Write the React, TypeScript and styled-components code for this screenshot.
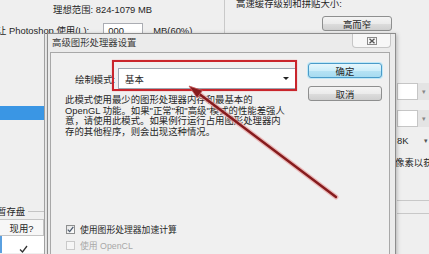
import styled, { createGlobalStyle } from 'styled-components';

const GlobalStyle = createGlobalStyle`
	html, body {
		margin: 0;
		padding: 0;
		background: #efefef;
	}

	body {
		font-family: 'Liberation Sans', 'Noto Sans CJK SC', sans-serif;
		color: #262626;
	}
`;

const App = () => {
	return (
		<Screen>
			<GlobalStyle />

			<TopBand>
				<TopLeft>
					<RangeLine>理想范围: 824-1079 MB</RangeLine>
					<UsageLine>
						让 Photoshop 使用(L):
						<UsageInput>000</UsageInput>
						<UsageUnit>MB(60%)</UsageUnit>
					</UsageLine>
				</TopLeft>
				<CacheGroup>
					<CacheTitle>高速缓存级别和拼贴大小:</CacheTitle>
					<PlainButton>高而窄</PlainButton>
				</CacheGroup>
			</TopBand>

			<Body>
				<Sidebar>
					<SideItem />
					<ScratchLegend>
						暂存盘
						<LegendRule />
					</ScratchLegend>
					<ScratchTable>
						<HeaderCell>现用?</HeaderCell>
						<TableRow>
							<svg width='9' height='8' viewBox='0 0 9 8'>
								<path d='M1 4.5 L3.5 7 L8 1' fill='none' stroke='#333' strokeWidth='1.3' />
							</svg>
						</TableRow>
					</ScratchTable>
				</Sidebar>

				<Middle />

				<RightStrip>
					<Combo $top={50}>
						<ComboField />
						<ComboArrow>▾</ComboArrow>
					</Combo>
					<Combo $top={10}>
						<ComboField />
						<ComboArrow>▾</ComboArrow>
					</Combo>
					<TileRow>
						8K
						<span>▾</span>
					</TileRow>
					<HintRow>像素以获</HintRow>
					<StripRule $top={30} />
					<StripRule $top={12} />
				</RightStrip>
			</Body>

			<Dialog>
				<TitleBar>
					<Title>高级图形处理器设置</Title>
					<CloseButton>
						<svg width='10' height='8' viewBox='0 0 10 8'>
							<rect x='0.5' y='0.5' width='9' height='7' fill='none' stroke='#8a8a8a' />
							<path d='M2.5 1.8 L7.5 6.2 M7.5 1.8 L2.5 6.2' stroke='#555' strokeWidth='1.4' />
						</svg>
					</CloseButton>
				</TitleBar>

				<Client>
					<MainColumn>
						<FormRow>
							<FieldLabel>绘制模式:</FieldLabel>
							<Select>
								基本
								<Caret />
							</Select>
						</FormRow>

						<Description>
							此模式使用最少的图形处理器内存和最基本的
							<br />
							OpenGL 功能。如果"正常"和"高级"模式的性能差强人
							<br />
							意，请使用此模式。如果例行运行占用图形处理器内
							<br />
							存的其他程序，则会出现这种情况。
						</Description>

						<OptionList>
							<OptionRow>
								<CheckBox>
									<svg width='7' height='7' viewBox='0 0 7 7'>
										<path d='M0.8 3.6 L2.7 5.6 L6.3 0.8' fill='none' stroke='#4b5a6e' strokeWidth='1.3' />
									</svg>
								</CheckBox>
								使用图形处理器加速计算
							</OptionRow>
							<OptionRow $disabled>
								<CheckBox $disabled />
								使用 OpenCL
							</OptionRow>
						</OptionList>
					</MainColumn>

					<ButtonColumn>
						<DialogButton $primary>确定</DialogButton>
						<DialogButton>取消</DialogButton>
					</ButtonColumn>
				</Client>
			</Dialog>

			<RedBox />

			<Arrow width='429' height='254' viewBox='0 0 429 254'>
				<line x1='336' y1='197' x2='198' y2='93' stroke='#e9a3a3' strokeWidth='5' strokeLinecap='round' opacity='0.7' />
				<line x1='336' y1='197' x2='198' y2='93' stroke='#861b1d' strokeWidth='2.4' strokeLinecap='round' />
				<polygon points='189,86 202.5,90.5 197,97.8' fill='#861b1d' stroke='#c95a5a' strokeWidth='0.8' />
			</Arrow>
		</Screen>
	);
};

export default App;

const Screen = styled.div`
	position: relative;
	width: 429px;
	height: 254px;
	overflow: hidden;

	background: #efefef;
	font-size: 9.4px;
`;

const TopBand = styled.div`
	display: grid;
	grid-template-columns: 224px 1fr;
	height: 33px;
`;

const TopLeft = styled.div`
	display: flex;
	flex-direction: column;
`;

const RangeLine = styled.div`
	padding-left: 53px;
	line-height: 20px;
	white-space: nowrap;
`;

const UsageLine = styled.div`
	display: flex;
	align-items: center;

	margin-left: -3px;
	height: 20px;
	white-space: nowrap;
`;

const UsageInput = styled.span`
	display: inline-block;
	box-sizing: border-box;
	margin-left: 14px;
	width: 40px;
	height: 15px;
	padding-left: 4px;

	border: 1px solid #abadb3;
	background: #fff;
	line-height: 13px;
`;

const UsageUnit = styled.span`
	margin-left: 10px;
`;

const CacheGroup = styled.div`
	display: flex;
	flex-direction: column;
	align-items: flex-start;

	padding-left: 11px;
	border-left: 1px solid #c9c9c9;
`;

const CacheTitle = styled.div`
	margin-top: -1px;
	line-height: 10px;
	white-space: nowrap;
`;

const PlainButton = styled.div`
	display: flex;
	align-items: center;
	justify-content: center;
	box-sizing: border-box;

	margin: 7px 0 0 86px;
	width: 70px;
	height: 15px;

	border: 1px solid #8e8f8f;
	border-radius: 3px;
	background: linear-gradient(#f4f4f4, #ebebeb 50%, #dddddd 51%, #cfcfcf);
`;

const Body = styled.div`
	display: flex;
	height: 221px;
`;

const Sidebar = styled.div`
	display: flex;
	flex-direction: column;

	width: 44px;
	border-right: 1px solid #a3a3a3;
`;

const SideItem = styled.div`
	margin-top: 73px;
	height: 14px;
	background: #3a96e4;
`;

const ScratchLegend = styled.div`
	display: flex;
	align-items: center;
	gap: 3px;

	margin: 84px 0 0 -3px;
	height: 14px;
	white-space: nowrap;
`;

const LegendRule = styled.div`
	flex: 1;
	border-top: 1px solid #c4c4c4;
`;

const ScratchTable = styled.div`
	margin-top: 1px;
	border-top: 1px solid #c5c5c5;
`;

const HeaderCell = styled.div`
	display: flex;
	align-items: center;
	justify-content: center;

	height: 15px;
	border-right: 1px solid #c5c5c5;
	border-bottom: 1px solid #c5c5c5;
	background: #f7f7f7;
`;

const TableRow = styled.div`
	display: flex;
	align-items: flex-end;
	justify-content: center;

	height: 17px;
	border-left: 2px solid #5aa0e0;
	background: #fff;
`;

const Middle = styled.div`
	flex: 1;
`;

const RightStrip = styled.div`
	display: flex;
	flex-direction: column;

	width: 32px;
	padding-left: 1px;
`;

const Combo = styled.div<{ $top: number }>`
	display: flex;
	margin-top: ${({ $top }) => $top}px;
	height: 17px;
`;

const ComboField = styled.div`
	flex: 1;
	border: 1px solid #c6c6c6;
	background: #fff;
`;

const ComboArrow = styled.div`
	display: flex;
	align-items: center;
	justify-content: center;

	width: 11px;
	background: #e4e4e4;
	color: #888;
	font-size: 7px;
`;

const TileRow = styled.div`
	display: flex;
	justify-content: space-between;

	margin-top: 7px;
	padding-right: 1px;
	line-height: 14px;

	> span {
		font-size: 7px;
		color: #555;
	}
`;

const HintRow = styled.div`
	margin: 8px 0 0 -2px;
	line-height: 14px;
	white-space: nowrap;
`;

const StripRule = styled.div<{ $top: number }>`
	margin-top: ${({ $top }) => $top}px;
	border-top: 1px solid #c8c8c8;
`;

const Dialog = styled.div`
	position: absolute;
	left: 47px;
	top: 33px;
	display: flex;
	flex-direction: column;
	box-sizing: border-box;
	width: 349px;
	height: 232px;

	border: 1px solid #8d8d8d;
	border-bottom: none;
	background: #ebebeb;
	box-shadow: 1px 1px 4px rgba(0, 0, 0, 0.25);
`;

const TitleBar = styled.div`
	display: flex;
	align-items: flex-start;
	height: 18px;
`;

const Title = styled.span`
	padding-left: 4px;
	line-height: 18px;
	color: #3a3a3a;
	white-space: nowrap;
`;

const CloseButton = styled.div`
	display: flex;
	align-items: center;
	justify-content: center;
	box-sizing: border-box;

	margin: 0 4px 0 auto;
	width: 39px;
	height: 14px;

	border: 1px solid #c6c6c6;
	border-top: none;
	border-radius: 0 0 4px 4px;
	background: #f7f7f7;
`;

const Client = styled.div`
	flex: 1;
	display: grid;
	grid-template-columns: 1fr 74px;
	column-gap: 12px;

	margin: 0 5px 0 2px;
	padding: 0 7px 0 14px;

	border: 1px solid #a8a8a8;
	border-bottom: none;
	background: #f0f0f0;
`;

const MainColumn = styled.div`
	display: flex;
	flex-direction: column;
	padding-top: 15px;
`;

const FormRow = styled.div`
	display: flex;
	align-items: center;

	height: 21px;
	padding-left: 10px;
`;

const FieldLabel = styled.span`
	margin-right: 3px;
	white-space: nowrap;
`;

const Select = styled.div`
	flex: 1;
	display: flex;
	align-items: center;
	justify-content: space-between;
	box-sizing: border-box;

	height: 21px;
	padding: 0 6px;

	border: 1px solid #9ea7b2;
	background: #fff;
`;

const Caret = styled.span`
	width: 0;
	height: 0;

	border-left: 3px solid transparent;
	border-right: 3px solid transparent;
	border-top: 3px solid #222;
`;

const Description = styled.p`
	margin: 6px 0 0;
	line-height: 10.6px;
	white-space: nowrap;
`;

const OptionList = styled.div`
	display: flex;
	flex-direction: column;
	margin-top: 84px;
`;

const OptionRow = styled.div<{ $disabled?: boolean }>`
	display: flex;
	align-items: center;
	gap: 5px;

	height: 16px;
	padding-left: 1px;

	font-size: 8.8px;
	color: ${({ $disabled }) => ($disabled ? '#a8a8a8' : '#262626')};
	white-space: nowrap;
`;

const CheckBox = styled.span<{ $disabled?: boolean }>`
	display: flex;
	align-items: center;
	justify-content: center;
	box-sizing: border-box;

	width: 9px;
	height: 9px;

	border: 1px solid ${({ $disabled }) => ($disabled ? '#cacaca' : '#8e8f8f')};
	background: ${({ $disabled }) => ($disabled ? '#f6f6f6' : 'linear-gradient(135deg, #e4e4e4, #fdfdfd)')};
`;

const ButtonColumn = styled.div`
	display: flex;
	flex-direction: column;
	gap: 8px;
	padding-top: 10px;
`;

const DialogButton = styled.div<{ $primary?: boolean }>`
	display: flex;
	align-items: center;
	justify-content: center;
	box-sizing: border-box;
	height: 15px;

	border: 1px solid ${({ $primary }) => ($primary ? '#4a9bc9' : '#8e8f8f')};
	border-radius: 3px;
	background: ${({ $primary }) =>
		$primary
			? 'linear-gradient(#e6f6fc, #cdeefa 50%, #b6e3f5 51%, #a6dbf0)'
			: 'linear-gradient(#f4f4f4, #ebebeb 50%, #dddddd 51%, #cfcfcf)'};
	box-shadow: ${({ $primary }) => ($primary ? '0 0 0 1px #bfe8f7' : 'none')};
`;

const RedBox = styled.div`
	position: absolute;
	left: 112px;
	top: 60px;
	box-sizing: border-box;
	width: 185px;
	height: 31px;

	border: 2px solid #c9252c;
	box-shadow: 0 0 1px #e88;
`;

const Arrow = styled.svg`
	position: absolute;
	left: 0;
	top: 0;
	pointer-events: none;
`;
